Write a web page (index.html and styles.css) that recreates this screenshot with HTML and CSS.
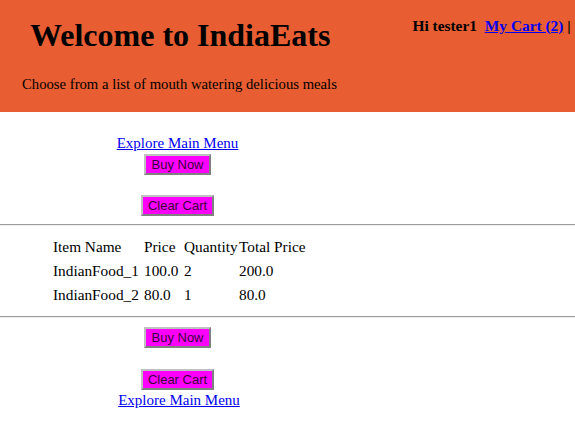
FILE: index.html
```html
<!DOCTYPE html>
<html>
<head>
<meta charset="utf-8">
<link rel="stylesheet" href="styles.css">
</head>
<body>
<header class="header">
  <div class="header-top">
    <h1 class="title">Welcome to IndiaEats</h1>
    <div class="user">Hi tester1 <a href="#" class="cart-link">My Cart (2)</a> |</div>
  </div>
  <p class="tagline">Choose from a list of mouth watering delicious meals</p>
</header>
<main class="content">
  <div class="actions">
    <a href="#" class="menu-link">Explore Main Menu</a>
    <button class="btn btn-buy">Buy Now</button>
    <button class="btn btn-clear">Clear Cart</button>
  </div>
  <hr class="rule">
  <table class="cart">
    <colgroup><col class="c-name"><col class="c-price"><col class="c-qty"><col class="c-total"></colgroup>
    <tr><td>Item Name</td><td>Price</td><td>Quantity</td><td>Total Price</td></tr>
    <tr><td>IndianFood_1</td><td class="num">100.0</td><td class="num">2</td><td class="num">200.0</td></tr>
    <tr><td>IndianFood_2</td><td class="num">80.0</td><td class="num">1</td><td class="num">80.0</td></tr>
  </table>
  <hr class="rule">
  <div class="actions">
    <button class="btn btn-buy">Buy Now</button>
    <button class="btn btn-clear">Clear Cart</button>
    <a href="#" class="menu-link menu-link-bottom">Explore Main Menu</a>
  </div>
</main>
</body>
</html>
```
FILE: styles.css
```css
html, body {
  margin: 0;
  padding: 0;
  background: #fff;
  font-family: "Liberation Serif", "Times New Roman", serif;
  color: #000;
}
.header {
  background: #e85d31;
  height: 112px;
  overflow: hidden;
  white-space: nowrap;
}
.header-top {
  display: flex;
  align-items: flex-start;
}
.title {
  margin: 15px 0 0 30px;
  font-size: 32px;
  font-weight: bold;
  line-height: 40px;
}
.user {
  margin: 16px 0 0 82px;
  font-size: 15.4px;
  font-weight: bold;
  line-height: 20px;
}
.cart-link {
  color: #0000ee;
  margin-left: 4px;
}
.tagline {
  margin: 20px 0 0 22px;
  font-size: 14.7px;
  line-height: 18px;
}
.content {
  width: 355px;
}
.actions {
  display: flex;
  flex-direction: column;
  align-items: center;
}
.menu-link {
  color: #0000ee;
  font-size: 15px;
  line-height: 18px;
  margin-top: 22px;
}
.menu-link-bottom {
  margin-top: 1px;
  margin-left: 3px;
}
.btn {
  font-family: "Liberation Sans", Arial, sans-serif;
  font-size: 13px;
  background: #ff00ff;
  color: #3a003a;
  border: 2px solid;
  border-color: #c0c0c0 #808080 #808080 #c0c0c0;
  padding: 0 5px;
  height: 21px;
  line-height: 17px;
}
.btn-buy {
  margin-top: 2px;
}
.btn-clear {
  margin-top: 20px;
}
.rule {
  width: 575px;
  margin: 8px 0 0 0;
  border: 0;
  border-top: 1px solid #9a9a9a;
  border-bottom: 1px solid #eee;
  height: 0;
}
.cart {
  border-collapse: collapse;
  table-layout: fixed;
  margin: 9px 0 9px 53px;
  font-size: 15.3px;
  white-space: nowrap;
}
.c-name { width: 91px; }
.c-price { width: 40px; }
.c-qty { width: 55px; }
.c-total { width: 70px; }
.cart td {
  padding: 0;
  height: 24px;
  line-height: 18px;
}
.actions:last-child .btn-buy {
  margin-top: 9px;
}
.actions:last-child .btn-clear {
  margin-top: 21px;
}
```
